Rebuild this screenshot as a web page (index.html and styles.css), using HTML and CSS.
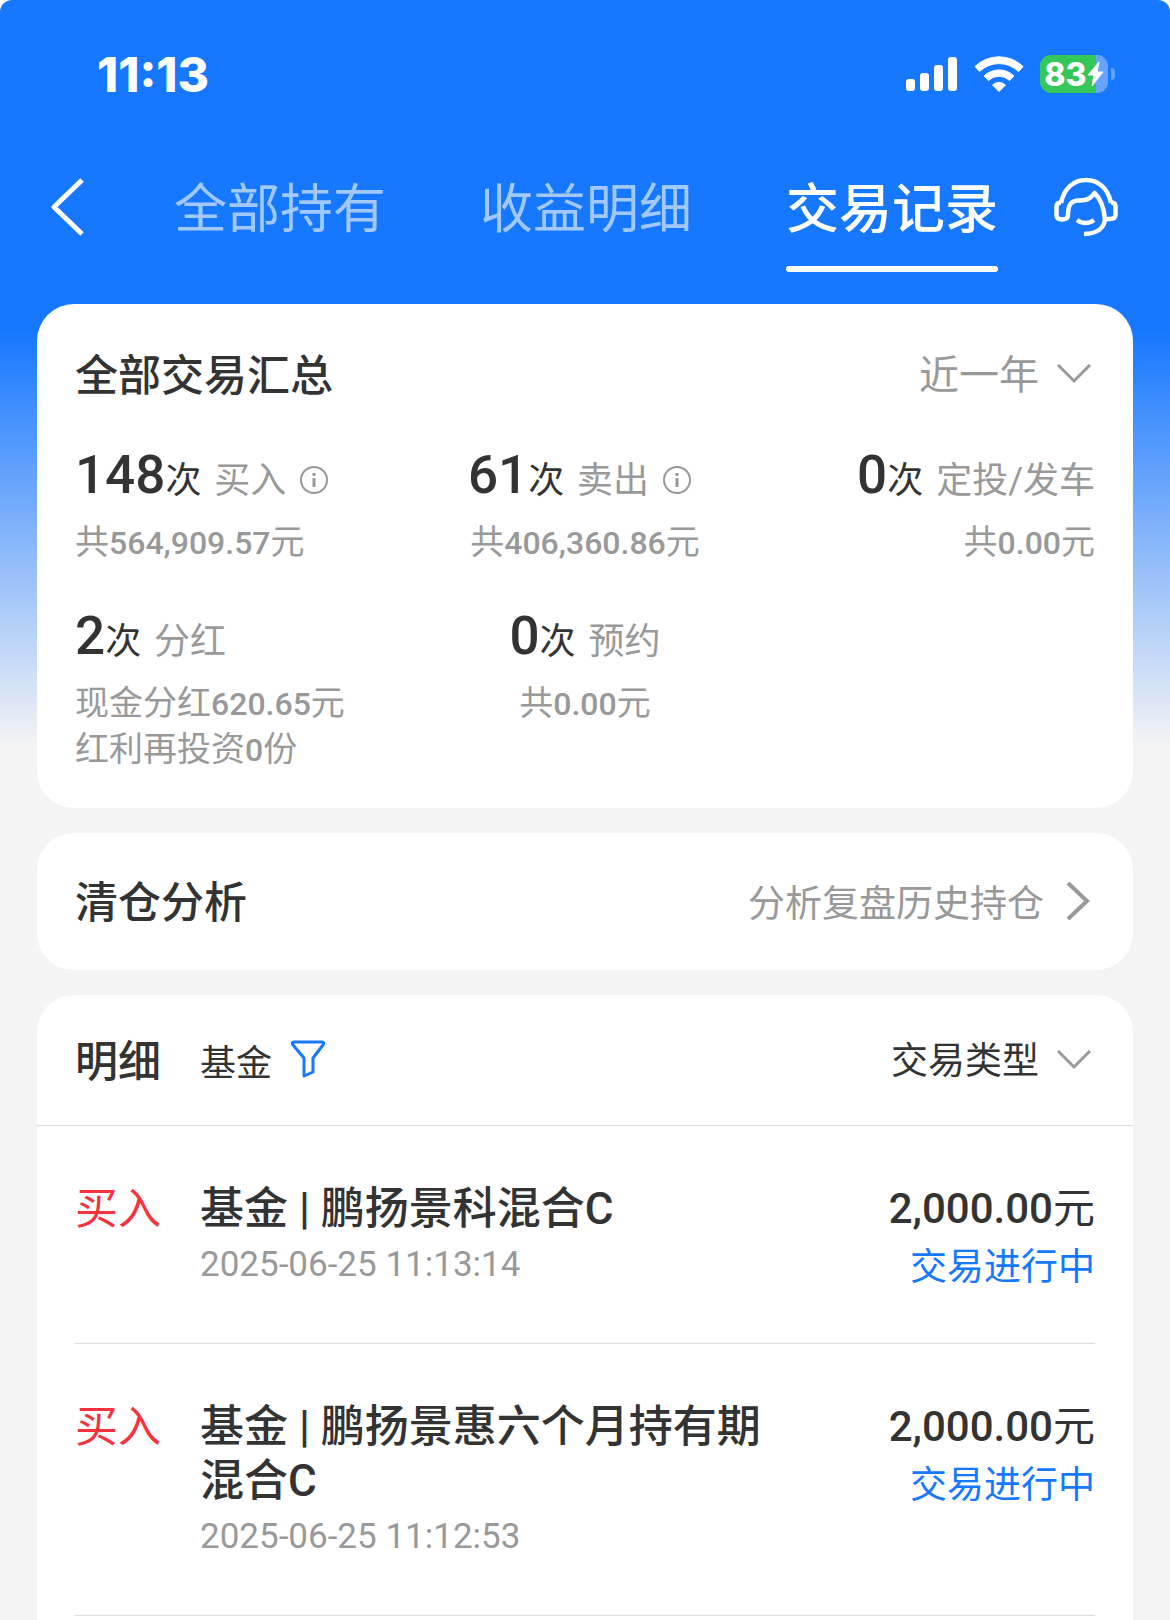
FILE: index.html
```
<!DOCTYPE html>
<html lang="zh-CN">
<head>
  <meta charset="UTF-8" />
  <meta name="viewport" content="width=device-width, initial-scale=1" />
  <title>交易记录</title>
  <link rel="stylesheet" href="styles.css">
</head>
<body>
  <div class="page">
    <!-- STATUS BAR -->
    <div class="status-bar">
      <span class="time">11:13</span>
      <div class="status-icons">
        <svg width="52" height="36" viewBox="0 0 52 36" fill="#fff">
          <rect x="0" y="23" width="9" height="12" rx="3" />
          <rect x="14" y="17" width="9" height="18" rx="3" />
          <rect x="28" y="9" width="9" height="26" rx="3" />
          <rect x="42" y="1" width="9" height="34" rx="3" />
        </svg>
        <svg width="50" height="36" viewBox="0 0 50 36" fill="#fff">
          <path d="M1 10.500a34.500 34.500 0 0 1 48 0l-4.500 5a28 28 0 0 0-39 0z" stroke="#fff" stroke-linejoin="round" />
          <path d="M10 20a21.500 21.500 0 0 1 30 0l-4.500 4.500a15 15 0 0 0-21 0z" stroke="#fff" stroke-linejoin="round" />
          <path d="M18.500 29a9.500 9.500 0 0 1 13 0l-6.500 6.500z" stroke="#fff" stroke-linejoin="round" />
        </svg>
        <div class="battery">
          <span class="battery-level">83</span>
          <svg width="17" height="26" viewBox="0 0 17 26" fill="#fff">
            <path d="M12 1L1 14h6L5 25 16 11h-6z" stroke="#fff" stroke-linejoin="round" />
          </svg>
        </div>
      </div>
    </div>

    <!-- TOP NAV -->
    <nav class="nav">
      <button class="icon-btn" aria-label="返回">
        <svg width="34" height="58" viewBox="0 0 34 58" fill="none" stroke="#fff" stroke-width="5" stroke-linejoin="round">
          <path d="M32 2L4 29l28 27" />
        </svg>
      </button>
      <div class="tabs">
        <a class="tab" href="#">全部持有</a>
        <a class="tab" href="#">收益明细</a>
        <a class="tab active" href="#">交易记录</a>
      </div>
      <button class="icon-btn service" aria-label="客服">
        <svg width="64" height="60" viewBox="0 0 64 60" fill="none" stroke="#fff" stroke-width="4.500" stroke-linejoin="round">
          <path d="M7 26C10 11 20 3 32 3S54 11 57 26" />
          <path d="M7 25.500c-3 0-4.500 1-4.500 4V38c0 3 2 4.500 5.500 4.500s6-1.500 6-4.500c0-9 2-14 10-14.500 8-.5 11 0 16.500-7.500C48 23 50 32 51 42h5c4 0 5.500-1.500 5.500-4.500v-8c0-3-1.500-4-4.500-4" />
          <path d="M51 41c0 9-7 16-21 16" />
          <path d="M23 43c5 4 12 4 17 0" />
        </svg>
      </button>
    </nav>

    <main class="content">
      <!-- SUMMARY -->
      <section class="card summary">
        <div class="card-head">
          <h2>全部交易汇总</h2>
          <div class="picker">
            <select class="range" aria-label="时间范围">
              <option>近一年</option>
            </select>
            <svg class="arrow" width="34" height="20" viewBox="0 0 34 20" fill="none" stroke="#999" stroke-width="3">
              <path d="M1 1l16 16L33 1" />
            </svg>
          </div>
        </div>
        <div class="stats">
          <div class="stat">
            <div class="stat-main">
              <b>148</b>次 <span class="label">买入</span>
              <svg class="info" width="30" height="30" viewBox="0 0 30 30" fill="none" stroke="#999" stroke-width="2">
                <circle cx="15" cy="15" r="13" />
                <path d="M15 13v9M15 8v3" stroke-width="3" />
              </svg>
            </div>
            <p>共<span class="num">564,909.57</span>元</p>
          </div>
          <div class="stat">
            <div class="stat-main">
              <b>61</b>次 <span class="label">卖出</span>
              <svg class="info" width="30" height="30" viewBox="0 0 30 30" fill="none" stroke="#999" stroke-width="2">
                <circle cx="15" cy="15" r="13" />
                <path d="M15 13v9M15 8v3" stroke-width="3" />
              </svg>
            </div>
            <p>共<span class="num">406,360.86</span>元</p>
          </div>
          <div class="stat">
            <div class="stat-main"><b>0</b>次 <span class="label">定投/发车</span></div>
            <p>共<span class="num">0.00</span>元</p>
          </div>
          <div class="stat">
            <div class="stat-main"><b>2</b>次 <span class="label">分红</span></div>
            <p>现金分红<span class="num">620.65</span>元</p>
            <p>红利再投资<span class="num">0</span>份</p>
          </div>
          <div class="stat">
            <div class="stat-main"><b>0</b>次 <span class="label">预约</span></div>
            <p>共<span class="num">0.00</span>元</p>
          </div>
        </div>
      </section>

      <!-- CLEARED POSITIONS -->
      <section class="card analysis">
        <h2>清仓分析</h2>
        <a class="more" href="#">分析复盘历史持仓
          <svg width="26" height="38" viewBox="0 0 26 38" fill="none" stroke="#999" stroke-width="4">
            <path d="M3 1l19 18L3 37" />
          </svg>
        </a>
      </section>

      <!-- RECORDS -->
      <section class="card records">
        <div class="records-head">
          <h2>明细</h2>
          <button class="filter">基金
            <svg width="36" height="40" viewBox="0 0 36 40" fill="none" stroke="#1677ff" stroke-width="3" stroke-linejoin="round">
              <path d="M4 2h28q3 0 1 3L23 18v14l-9 4V18L3 5Q1 2 4 2z" />
            </svg>
          </button>
          <div class="picker">
            <select aria-label="交易类型">
              <option>交易类型</option>
            </select>
            <svg class="arrow" width="34" height="20" viewBox="0 0 34 20" fill="none" stroke="#999" stroke-width="3">
              <path d="M1 1l16 16L33 1" />
            </svg>
          </div>
        </div>
        <ul>
          <li class="record">
            <span class="type">买入</span>
            <div class="detail">
              <h3>基金 | 鹏扬景科混合C</h3>
              <time>2025-06-25 11:13:14</time>
            </div>
            <div class="amount">
              <p><b>2,000.00</b>元</p>
              <span class="state">交易进行中</span>
            </div>
          </li>
          <li class="record">
            <span class="type">买入</span>
            <div class="detail">
              <h3>基金 | 鹏扬景惠六个月持有期混合C</h3>
              <time>2025-06-25 11:12:53</time>
            </div>
            <div class="amount">
              <p><b>2,000.00</b>元</p>
              <span class="state">交易进行中</span>
            </div>
          </li>
        </ul>
      </section>
    </main>
  </div>
</body>
</html>
```
FILE: styles.css
```
* {
  box-sizing: border-box;
  margin: 0;
  padding: 0;
}
html {
  background: #fff;
}
body {
  font-family: Roboto, "Noto Sans CJK SC", sans-serif;
  color: #333;
}
svg {
  display: block;
  flex-shrink: 0;
}
button, select {
  font: inherit;
  color: inherit;
  background: none;
  border: none;
  appearance: none;
  cursor: pointer;
}
a {
  color: inherit;
  text-decoration: none;
}
ul {
  list-style: none;
}
h2 {
  height: 64px;
  font-size: 43px;
  font-weight: 500;
  line-height: 68px;
}
.page {
  display: flex;
  flex-direction: column;
  min-height: 100vh;
  background: linear-gradient(#1677ff 330px, #f4f4f4 745px);
  border-radius: 12px 12px 0 0;
}

/* status bar */
.status-bar {
  display: flex;
  justify-content: space-between;
  align-items: center;
  height: 148px;
  padding: 0 62px 0 97px;
  color: #fff;
}
.time {
  font-family: Inter, sans-serif;
  font-size: 48px;
  font-weight: 800;
}
.status-icons {
  display: flex;
  align-items: center;
  gap: 16px;
}
.battery {
  position: relative;
  display: flex;
  align-items: center;
  justify-content: center;
  width: 68px;
  height: 38px;
  border-radius: 11px;
  background: linear-gradient(90deg, #34c759 82%, #66a3ff 82%);
}
.battery::after {
  content: "";
  position: absolute;
  left: 71px;
  top: 13px;
  width: 4px;
  height: 12px;
  border-radius: 0 4px 4px 0;
  background: #66a3ff;
}
.battery-level {
  font-family: Inter, sans-serif;
  font-size: 32px;
  font-weight: 800;
}

/* nav */
.nav {
  display: flex;
  align-items: flex-start;
  padding: 21px 52px 32px 50px;
}
.icon-btn {
  display: flex;
  align-items: center;
  height: 76px;
}
.service {
  margin-left: auto;
}
.tabs {
  display: flex;
  gap: 94px;
  margin-left: 90px;
}
.tab {
  font-size: 53px;
  line-height: 82px;
  color: #a2c9ff;
}
.tab::after {
  content: "";
  display: block;
  height: 6px;
  margin-top: 15px;
  border-radius: 3px;
}
.tab.active {
  color: #fff;
  font-weight: 500;
}
.tab.active::after {
  background: #fff;
}

/* cards */
.content {
  flex: 1;
  display: flex;
  flex-direction: column;
  gap: 25px;
  padding: 0 37px;
}
.card {
  background: #fff;
  border-radius: 37px;
}
.summary {
  padding: 38px 38px 35px;
}
.card-head {
  display: flex;
  justify-content: space-between;
  align-items: center;
}
.picker {
  display: flex;
  align-items: center;
  gap: 18px;
  padding-right: 4px;
}
.picker select {
  height: 64px;
  padding-top: 3px;
  font-size: 37px;
}
.picker .range {
  font-size: 40px;
  color: #999;
}
.arrow {
  pointer-events: none;
}
.stats {
  display: grid;
  grid-template-columns: repeat(3, 1fr);
  row-gap: 43px;
  margin-top: 42px;
}
.stat:nth-child(3n+2) {
  text-align: center;
}
.stat:nth-child(3n) {
  text-align: right;
}
.stat-main {
  height: 72px;
  font-size: 36px;
  line-height: 54px;
  white-space: nowrap;
}
.stat-main b {
  font-size: 53px;
  font-weight: 500;
}
.label {
  margin-left: 4px;
  color: #999;
}
.info {
  display: inline-block;
  margin: 0 10px 0 4px;
  vertical-align: -2px;
}
.stat p {
  font-size: 34px;
  line-height: 45px;
  color: #999;
}
.num {
  font-size: 32px;
  font-weight: 500;
}
.analysis {
  display: flex;
  justify-content: space-between;
  align-items: center;
  padding: 36px 42px 37px 38px;
}
.more {
  display: flex;
  align-items: center;
  gap: 21px;
  font-size: 37px;
  color: #999;
}

/* records */
.records {
  flex: 1;
  border-radius: 37px 37px 0 0;
}
.records-head {
  display: flex;
  align-items: center;
  padding: 33px 38px;
  border-bottom: 1px solid #ddd;
}
.records-head .picker {
  margin-left: auto;
}
.filter {
  display: flex;
  align-items: center;
  gap: 18px;
  margin-left: 39px;
  font-size: 36px;
}
.record {
  display: flex;
  align-items: flex-start;
  margin: 0 38px;
  padding: 56px 0 54px;
  border-bottom: 1px solid #ddd;
}
.type {
  width: 125px;
  font-size: 43px;
  line-height: 54px;
  color: #f5333f;
}
.detail {
  flex: 1;
  padding-right: 120px;
}
.detail h3 {
  font-size: 44px;
  font-weight: 500;
  line-height: 54px;
}
.detail time {
  display: block;
  margin-top: 5px;
  font-size: 35px;
  line-height: 48px;
  color: #999;
}
.amount {
  margin-bottom: -6px;
  text-align: right;
  white-space: nowrap;
}
.amount p {
  font-size: 42px;
  line-height: 54px;
}
.amount b {
  font-weight: 500;
}
.state {
  display: block;
  margin-top: 5px;
  font-size: 37px;
  line-height: 54px;
  color: #1677ff;
}
```
